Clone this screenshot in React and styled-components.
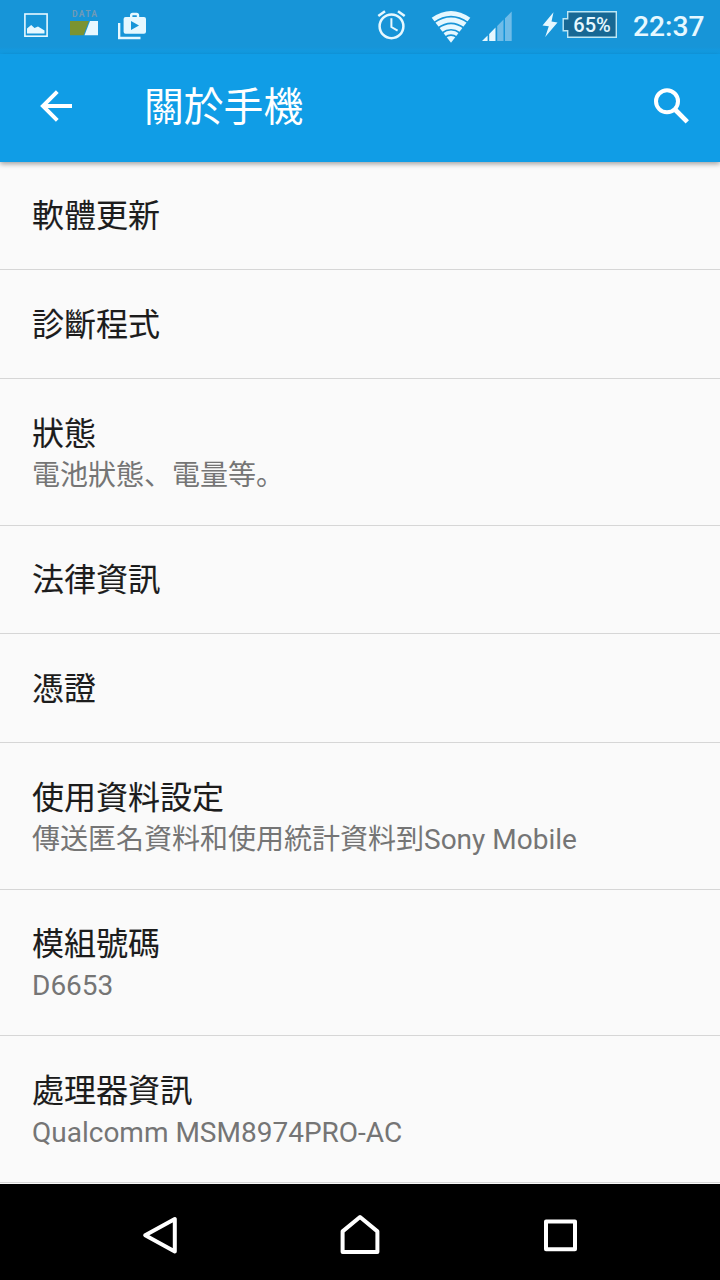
import React from 'react';
import styled, { createGlobalStyle } from 'styled-components';

const GlobalStyle = createGlobalStyle`
  body {
    margin: 0;
    background: #fafafa;
    font-family: Roboto, "Noto Sans CJK JP", sans-serif;
  }
`;

const Screen = styled.div`
  display: flex;
  flex-direction: column;
  width: 720px;
  height: 1280px;
  overflow: hidden;
  background: #fafafa;
`;

const StatusBar = styled.header`
  display: flex;
  justify-content: space-between;
  height: 54px;
  box-sizing: border-box;
  padding: 0 15px 0 24px;
  background: linear-gradient(#1795d8 0, #1795d8 47px, #109de6 54px);
`;

const IconGroup = styled.div`
  display: flex;
  align-items: flex-start;
`;

const Glyph = styled.svg`
  display: block;
  flex: none;
  margin-left: ${(p) => p.$gap || 0}px;
`;

const Clock = styled.span`
  width: 72px;
  margin-left: 14px;
  color: #e6f8ff;
  font-size: 28.2px;
  font-weight: 500;
  line-height: 53px;
  white-space: nowrap;
`;

const AppBar = styled.div`
  display: flex;
  align-items: center;
  height: 108px;
  box-sizing: border-box;
  padding: 0 30px 4px 40px;
  background: #109de6;
  box-shadow: 0 2px 5px rgba(0, 0, 0, 0.36);
  z-index: 1;
`;

const Title = styled.h1`
  flex: 1;
  margin: 0;
  padding: 3px 0 0 72px;
  color: #fff;
  font-size: 39.8px;
  font-weight: 400;
  line-height: 56px;
`;

const List = styled.main`
  display: flex;
  flex-direction: column;
  height: 1022px;
`;

const Row = styled.section`
  display: flex;
  flex-direction: column;
  justify-content: center;
  flex: none;
  height: ${(p) => p.$height}px;
  box-sizing: border-box;
  padding: ${(p) => (p.$double ? 5 : 1)}px 32px 0;
  border-bottom: 1px solid #d6d6d6;
`;

const Label = styled.div`
  color: #1c1c1c;
  font-size: 32px;
  line-height: 42px;
  -webkit-text-stroke: 0.12px currentColor;
`;

const Summary = styled.div`
  color: #757575;
  font-size: 28px;
  line-height: 42px;
`;

const NavBar = styled.nav`
  display: flex;
  align-items: center;
  justify-content: center;
  gap: 160px;
  height: 96px;
  background: #000;
`;

const rows = [
  { label: '軟體更新', height: 108 },
  { label: '診斷程式', height: 109 },
  { label: '狀態', summary: '電池狀態、電量等。', height: 147 },
  { label: '法律資訊', height: 108 },
  { label: '憑證', height: 109 },
  { label: '使用資料設定', summary: '傳送匿名資料和使用統計資料到Sony Mobile', height: 147 },
  { label: '模組號碼', summary: 'D6653', height: 146 },
  { label: '處理器資訊', summary: 'Qualcomm MSM8974PRO-AC', height: 147 },
];

const ICE = '#e6f8ff';

function PictureIcon() {
  return (
    <Glyph width="24" height="50" viewBox="0 0 24 50">
      <rect x="0.9" y="14" width="22.2" height="22.2" fill="none" stroke={ICE} strokeWidth="1.6" />
      <path d="M3 33.5V28.5L7.2 25L10.5 28L14 26.5L20.5 30.5V33.5Z" fill={ICE} />
    </Glyph>
  );
}

function DataIcon() {
  return (
    <Glyph $gap={22} width="28" height="50" viewBox="0 0 28 50">
      <text x="2" y="16.8" fontSize="8.6" fontWeight="700" textLength="25" fill="#6f9ab6">DATA</text>
      <path d="M0 21H19L13.5 35.2H0Z" fill="#7b9331" />
      <path d="M20 21H28V35.2H14.5Z" fill={ICE} />
    </Glyph>
  );
}

function StoreIcon() {
  return (
    <Glyph $gap={20} width="28" height="50" viewBox="0 0 28 50">
      <path d="M1.1 23V38H22.5" fill="none" stroke={ICE} strokeWidth="2.5" />
      <path d="M13.2 18V15.5Q13.2 14 14.7 14H18.5Q20 14 20 15.5V18" fill="none" stroke={ICE} strokeWidth="2.4" />
      <path fillRule="evenodd" d="M7.6 17H26Q28 17 28 19V31.8Q28 33.8 26 33.8H7.6Q5.6 33.8 5.6 31.8V19Q5.6 17 7.6 17ZM13 21V30L21 25.5Z" fill={ICE} />
    </Glyph>
  );
}

function AlarmIcon() {
  return (
    <Glyph width="29" height="50" viewBox="0 0 29 50" fill="none" stroke={ICE}>
      <circle cx="14.5" cy="26.3" r="11.9" strokeWidth="2.5" />
      <path d="M14.4 18.3V27L20.6 30.7" strokeWidth="2" />
      <path d="M1.3 16L8 11.2M27.7 16L21 11.2" strokeWidth="2.6" />
    </Glyph>
  );
}

function WifiIcon() {
  return (
    <Glyph $gap={25} width="40" height="50" viewBox="0 0 40 50">
      <path d="M0.7 17.8Q20 4.2 39.3 17.8L20 42.8Z" fill={ICE} />
      <g fill="none" stroke="#1795d8" strokeWidth="1.7">
        <path d="M3 22.6Q20 10.5 37 22.6" />
        <path d="M7 28Q20 18.6 33 28" />
        <path d="M11 33Q20 26.5 29 33" />
        <path d="M14 37.4Q20 33 26 37.4" />
      </g>
    </Glyph>
  );
}

function SignalIcon() {
  return (
    <Glyph $gap={11} width="30" height="50" viewBox="0 0 30 50">
      <path d="M0 41L5.6 35.5V41ZM7.2 34L13.5 27.5V41H7.2Z" fill={ICE} />
      <path d="M15.2 26L21.5 19.6V41H15.2ZM23 18.2L29.7 11.5V41H23Z" fill="#6fbce8" />
    </Glyph>
  );
}

function BatteryIcon() {
  return (
    <Glyph $gap={30} width="77" height="50" viewBox="0 0 77 50">
      <path d="M11.5 12.3L.5 25.4L6.8 26.2L3.2 37L15.5 22.6L9.5 21.4Z" fill={ICE} />
      <path d="M25.7 11.7H74.3V37.3H25.7V30.8H21.2V18.8H25.7Z" fill="#176894" stroke="#bce7f5" strokeWidth="1.4" />
      <text x="31.3" y="31.9" fontSize="20.5" fontWeight="500" textLength="37.5" lengthAdjust="spacingAndGlyphs" fill={ICE}>65%</text>
    </Glyph>
  );
}

function BackIcon() {
  return (
    <Glyph width="32" height="34" viewBox="0 0 32 34" fill="none" stroke="#fff" strokeWidth="3.9">
      <path d="M32 17H3M17.3 2.6L2.9 17L17.3 31.4" />
    </Glyph>
  );
}

function SearchIcon() {
  return (
    <Glyph width="36" height="36" viewBox="0 0 36 36" fill="none" stroke="#fff">
      <circle cx="13" cy="13.3" r="11" strokeWidth="4" />
      <path d="M21.5 22L33.3 33.8" strokeWidth="4.7" />
    </Glyph>
  );
}

function NavIcon({ d }) {
  return (
    <Glyph width="40" height="44" viewBox="0 -2 40 44">
      <path d={d} fill="none" stroke="#fff" strokeWidth="4" strokeLinejoin="round" />
    </Glyph>
  );
}

export default function App() {
  return (
    <Screen>
      <GlobalStyle />
      <StatusBar>
        <IconGroup>
          <PictureIcon />
          <DataIcon />
          <StoreIcon />
        </IconGroup>
        <IconGroup>
          <AlarmIcon />
          <WifiIcon />
          <SignalIcon />
          <BatteryIcon />
          <Clock>22:37</Clock>
        </IconGroup>
      </StatusBar>
      <AppBar>
        <BackIcon />
        <Title>關於手機</Title>
        <SearchIcon />
      </AppBar>
      <List>
        {rows.map(({ label, summary, height }) => (
          <Row key={label} $height={height} $double={Boolean(summary)}>
            <Label>{label}</Label>
            {summary && <Summary>{summary}</Summary>}
          </Row>
        ))}
      </List>
      <NavBar>
        <NavIcon d="M5.2 23.2L34.8 7V39.4Z" />
        <NavIcon d="M2.6 19.4L20 5L37.4 19.4V40H2.6Z" />
        <NavIcon d="M6 9.4H35V37.2H6Z" />
      </NavBar>
    </Screen>
  );
}
